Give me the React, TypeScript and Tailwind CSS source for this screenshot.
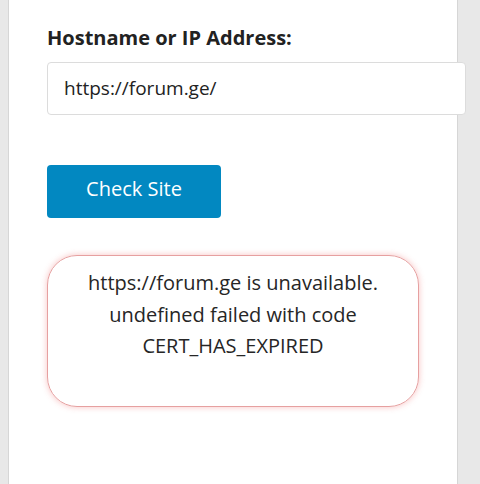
export default function App() {
  return (
    <div className="flex w-[480px] h-[484px] bg-[#e8e8e8] overflow-hidden" style={{ fontFamily: "'Open Sans', Lato, sans-serif" }}>
      <div className="w-[8px] shrink-0 bg-[#e8e8e8]" />
      <div className="w-[450px] shrink-0 h-full bg-white border-x border-[#d6d6d6] pl-[38px] pt-[24px]">
        <div className="text-[20px] font-bold text-[#222] leading-[28px]">Hostname or IP Address:</div>
        <div className="mt-[10px] w-[419px] h-[53px] border border-[#dcdcdc] rounded-[4px] bg-white flex items-center pl-[16px] text-[19px] text-[#222] relative z-10">
          https://forum.ge/
        </div>
        <button className="mt-[50px] w-[174px] h-[53px] rounded-[4px] bg-[#0288c1] text-white text-[20px] flex items-center justify-center pb-[5px]">
          Check Site
        </button>
        <div className="mt-[37px] w-[372px] h-[152px] rounded-[30px] border border-[#e6a0a0] shadow-[0_0_6px_rgba(240,120,120,0.45)] flex flex-col items-center pt-[11px] text-[20px] leading-[31.5px] text-[#262626]">
          <div>https://forum.ge is unavailable.</div>
          <div>undefined failed with code</div>
          <div>CERT_HAS_EXPIRED</div>
        </div>
      </div>
    </div>
  );
}
